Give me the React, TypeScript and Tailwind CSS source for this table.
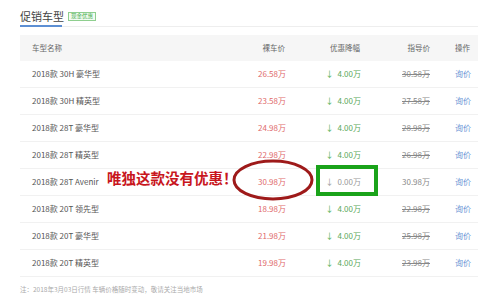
import React from 'react';

type CarRow = {
  name: string;
  price: string;
  cut: string;
  guide: string;
  noDeal?: boolean;
};

const rows: CarRow[] = [
  { name: '2018款 30H 豪华型', price: '26.58万', cut: '4.00万', guide: '30.58万' },
  { name: '2018款 30H 精英型', price: '23.58万', cut: '4.00万', guide: '27.58万' },
  { name: '2018款 28T 豪华型', price: '24.98万', cut: '4.00万', guide: '28.98万' },
  { name: '2018款 28T 精英型', price: '22.98万', cut: '4.00万', guide: '26.98万' },
  { name: '2018款 28T Avenir', price: '30.98万', cut: '0.00万', guide: '30.98万', noDeal: true },
  { name: '2018款 20T 领先型', price: '18.98万', cut: '4.00万', guide: '22.98万' },
  { name: '2018款 20T 豪华型', price: '21.98万', cut: '4.00万', guide: '25.98万' },
  { name: '2018款 20T 精英型', price: '19.98万', cut: '4.00万', guide: '23.98万' },
];

const font = { fontFamily: '"Noto Sans CJK SC", "Liberation Sans", sans-serif' };

const App = () => {
  return (
    <div className="relative w-[500px] h-[304px] bg-white overflow-hidden text-[#555]" style={font}>
      {/* Tab heading */}
      <div className="mx-5 w-[458px] pt-[7px] border-b border-[#eeeeee] flex items-end">
        <div className="flex items-center gap-[4px] h-[19px]">
          <div className="relative h-full flex items-center">
            <span className="text-[11px] leading-none text-[#444]">促销车型</span>
            <div className="absolute left-0 right-[2px] -bottom-[1px] h-[2px] bg-[#5d8fd3]" />
          </div>
          <span className="text-[5.5px] leading-none px-[2px] py-[1px] border border-[#8fcf8f] bg-[#f2fbf2] text-[#4caf50]">
            现金优惠
          </span>
        </div>
      </div>

      {/* Table */}
      <div className="mx-5 w-[458px] mt-[8px]">
        <div className="flex items-center h-[26px] bg-[#f6f6f6] text-[7.5px] text-[#666]">
          <div className="w-[230px] pl-[12px]">车型名称</div>
          <div className="w-[35px] text-right">裸车价</div>
          <div className="w-[75px] text-right">优惠降幅</div>
          <div className="w-[70px] text-right">指导价</div>
          <div className="pl-[25px]">操作</div>
        </div>
        {rows.map((r) => (
          <div key={r.name} className="flex items-center h-[27px] border-b border-[#f1f1f1] text-[8px]">
            <div className="w-[230px] pl-[12px] text-[#555]">{r.name}</div>
            <div className="w-[36px] text-right text-[#e06a6a]">{r.price}</div>
            <div className="w-[75px] flex justify-end items-center gap-[4px] text-[#5aa85a]">
              <span className={r.noDeal ? 'text-[#999]' : 'text-[#4caf50]'}>↓</span>
              <span className={r.noDeal ? 'text-[#999]' : ''}>{r.cut}</span>
            </div>
            <div className={`w-[69px] text-right text-[#888] ${r.noDeal ? '' : 'line-through'}`}>{r.guide}</div>
            <div className="pl-[25px] text-[#6b95d6]">询价</div>
          </div>
        ))}
      </div>

      <div className="mx-5 mt-[8px] text-[6.5px] text-[#aaa]">
        注：2018年3月03日行情 车辆价格随时变动，敬请关注当地市场
      </div>

      {/* Annotations */}
      <div className="absolute left-[107px] top-[171px] text-[14.5px] font-bold leading-none text-[#c8161d]">
        唯独这款没有优惠！
      </div>
      <svg className="absolute left-0 top-0" width="500" height="304">
        <ellipse cx="273" cy="180" rx="39" ry="19" fill="none" stroke="#9e1a1a" strokeWidth="3" />
        <rect x="318" y="167" width="58" height="27" fill="none" stroke="#1aa31a" strokeWidth="4" />
      </svg>
    </div>
  );
};

export default App;
